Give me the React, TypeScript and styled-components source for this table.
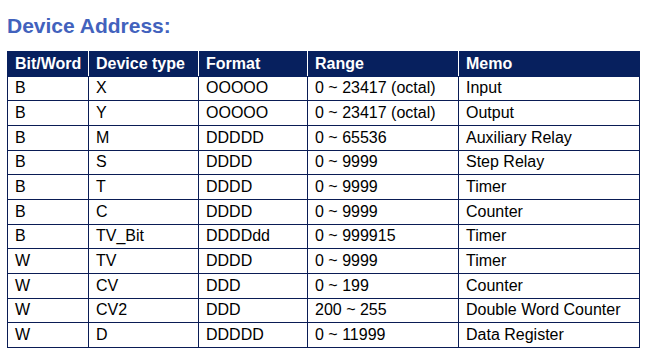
import React from "react";
import styled, { createGlobalStyle } from "styled-components";

const GlobalStyle = createGlobalStyle`
  html, body {
    margin: 0;
    padding: 0;
    background: #ffffff;
  }
  body {
    font-family: "Liberation Sans", Arial, sans-serif;
  }
`;

const Page = styled.div`
  width: 659px;
  height: 360px;
  padding: 10px 0 0 7px;
  box-sizing: border-box;
`;

const Title = styled.h2`
  margin: 0 0 10px 0;
  font-size: 21px;
  line-height: 31px;
  font-weight: bold;
  color: #4262bd;
`;

const Table = styled.table`
  border-collapse: collapse;
  width: 632px;
  table-layout: fixed;
  font-size: 16px;
`;

const Row = styled.tr`
  height: 24.67px;
`;

const HeadCell = styled.th<{ $w: number }>`
  box-sizing: border-box;
  width: ${(p) => p.$w}px;
  background: #07205e;
  color: #ffffff;
  font-weight: bold;
  text-align: left;
  padding: 0 0 0 7px;
  border: 1px solid #07205e;
  border-right-color: #ffffff;
  white-space: nowrap;
  &:last-child {
    border-right-color: #07205e;
  }
`;

const Cell = styled.td`
  box-sizing: border-box;
  color: #000000;
  padding: 0 0 0 7px;
  border: 1px solid #0a1c55;
  white-space: nowrap;
`;

const columns = [
  { label: "Bit/Word", w: 81 },
  { label: "Device type", w: 110 },
  { label: "Format", w: 109 },
  { label: "Range", w: 151 },
  { label: "Memo", w: 181 },
];

const rows: string[][] = [
  ["B", "X", "OOOOO", "0 ~ 23417 (octal)", "Input"],
  ["B", "Y", "OOOOO", "0 ~ 23417 (octal)", "Output"],
  ["B", "M", "DDDDD", "0 ~ 65536", "Auxiliary Relay"],
  ["B", "S", "DDDD", "0 ~ 9999", "Step Relay"],
  ["B", "T", "DDDD", "0 ~ 9999", "Timer"],
  ["B", "C", "DDDD", "0 ~ 9999", "Counter"],
  ["B", "TV_Bit", "DDDDdd", "0 ~ 999915", "Timer"],
  ["W", "TV", "DDDD", "0 ~ 9999", "Timer"],
  ["W", "CV", "DDD", "0 ~ 199", "Counter"],
  ["W", "CV2", "DDD", "200 ~ 255", "Double Word Counter"],
  ["W", "D", "DDDDD", "0 ~ 11999", "Data Register"],
];

export default function App() {
  return (
    <>
      <GlobalStyle />
      <Page>
        <Title>Device Address:</Title>
        <Table>
          <thead>
            <Row>
              {columns.map((c) => (
                <HeadCell key={c.label} $w={c.w}>
                  {c.label}
                </HeadCell>
              ))}
            </Row>
          </thead>
          <tbody>
            {rows.map((r, i) => (
              <Row key={i}>
                {r.map((v, j) => (
                  <Cell key={j}>{v}</Cell>
                ))}
              </Row>
            ))}
          </tbody>
        </Table>
      </Page>
    </>
  );
}
